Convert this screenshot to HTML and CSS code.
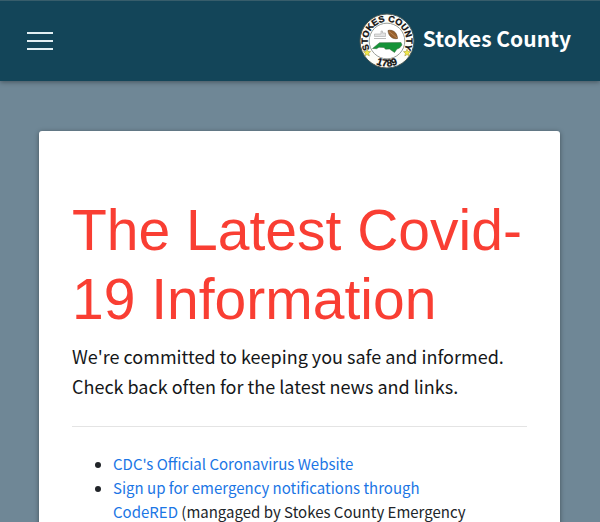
FILE: index.html
```html
<!DOCTYPE html>
<html lang="en">
<head>
<meta charset="utf-8">
<meta name="viewport" content="width=device-width, initial-scale=1">
<title>Stokes County</title>
<link rel="stylesheet" href="styles.css">
</head>
<body>
<header class="site-header">
  <button class="menu-button" type="button" aria-label="Menu">
    <span class="menu-bar"></span>
    <span class="menu-bar"></span>
    <span class="menu-bar"></span>
  </button>
  <a class="brand" href="#">
    <svg class="seal" viewBox="0 0 56 56" aria-hidden="true">
      <defs>
        <path id="arc-top" d="M11.4 37.6 A19.2 19.2 0 1 1 44.6 37.6"/>
        <path id="arc-bottom" d="M7 42.5 A25.5 25.5 0 0 0 49 42.5"/>
      </defs>
      <circle cx="28" cy="28" r="27" fill="#fdfdf8" stroke="#4c5a57" stroke-width="1"/>
      <circle cx="28" cy="28" r="17.8" fill="#fff" stroke="#999e9a" stroke-width="1"/>
      <text class="seal-text" text-anchor="middle"><textPath href="#arc-top" startOffset="50%">STOKES COUNTY</textPath></text>
      <text class="seal-text seal-year" text-anchor="middle"><textPath href="#arc-bottom" startOffset="50%">1789</textPath></text>
      <path d="M8 36.2 L9 38.5 L11.6 38.6 L9.7 40.4 L10.4 42.9 L8 41.6 L5.8 42.9 L6.4 40.4 L4.5 38.6 L7 38.5Z M48 36.2 L49 38.5 L51.6 38.6 L49.7 40.4 L50.4 42.9 L48 41.6 L45.8 42.9 L46.4 40.4 L44.5 38.6 L47 38.5Z" fill="#f3ea45" stroke="#98903c" stroke-width=".5"/>
      <path d="M15.5 23.5 V21 H22 V18 H23.5 V20 H26.5 V23.5Z" fill="#e2e2e2" stroke="#aaa" stroke-width=".6"/>
      <path d="M15 25.5 H27" stroke="#aaa" stroke-width=".8"/>
      <path d="M29 17.5 C33 16.5 38 18.5 38.5 25.5 C34 26.5 29.5 23.5 29 17.5Z" fill="#98602d" stroke="#60401f" stroke-width=".6"/>
      <path d="M30 18.5 L38 25" stroke="#d0a06c" stroke-width=".6"/>
      <path d="M13.5 35.5 L20.5 29.7 L42 29.5 L43 32 L40.5 35 L38 36 L35.5 39.5 L30.5 36 L26.5 36.2 L25 34.5 L20 34.3 L17.5 35.7Z" fill="#159338" stroke="#35683d" stroke-width=".5"/>
    </svg>
    <span class="brand-name">Stokes County</span>
  </a>
</header>
<main class="page">
  <article class="card">
    <h1 class="title">The Latest Covid-19 Information</h1>
    <p class="lead">We're committed to keeping you safe and informed. Check back often for the latest news and links.</p>
    <hr class="divider">
    <ul class="links">
      <li><a href="#">CDC's Official Coronavirus Website</a></li>
      <li><a href="#">Sign up for emergency notifications through CodeRED</a> (mangaged by Stokes County Emergency</li>
    </ul>
  </article>
</main>
</body>
</html>
```
FILE: styles.css
```css
* {
  box-sizing: border-box;
}

body {
  margin: 0;
  background: #6f8796;
  color: #212529;
  font-family: "Noto Sans CJK SC", "Noto Sans", sans-serif;
  font-size: 15px;
  line-height: 24px;
}

.site-header {
  position: relative;
  display: flex;
  align-items: center;
  justify-content: space-between;
  padding: 12px 29px 12px 27px;
  border-top: 1px solid #375d6b;
  background: #134559;
  box-shadow: 0 1px 5px rgba(0, 0, 0, 0.4);
}

.menu-button {
  display: flex;
  flex-direction: column;
  gap: 6px;
  padding: 0;
  border: 0;
  background: none;
  cursor: pointer;
}

.menu-bar {
  width: 26px;
  height: 2px;
  background: #e2eef2;
}

.brand {
  display: flex;
  align-items: center;
  gap: 8px;
  color: #fff;
  text-decoration: none;
}

.seal {
  display: block;
  width: 56px;
  height: 56px;
}

.seal-text {
  fill: #111;
  stroke: #111;
  stroke-width: 0.3px;
  font-family: "Liberation Sans", sans-serif;
  font-size: 9px;
  font-weight: 700;
}

.seal-year {
  font-size: 10px;
}

.brand-name {
  padding-bottom: 6px;
  font-size: 21px;
  font-weight: 700;
  line-height: 32px;
}

.page {
  padding: 50px 40px 48px 39px;
}

.card {
  padding: 65px 33px 48px;
  border-radius: 3px;
  background: #fff;
  box-shadow: 0 1px 5px rgba(0, 0, 0, 0.4);
}

.title {
  margin: 0 0 7px;
  color: #f93e33;
  font-family: "Liberation Sans", Arial, sans-serif;
  font-size: 57px;
  font-weight: 400;
  line-height: 69px;
}

.lead {
  margin: 0;
  font-size: 18px;
  line-height: 30px;
  color: #151719;
}

.divider {
  margin: 25px 0;
  border: 0;
  border-top: 1px solid #e4e4e4;
}

.links {
  margin: 0;
  padding: 0 55px 0 41px;
}

.links a {
  color: #1b76e5;
  text-decoration: none;
}
```
